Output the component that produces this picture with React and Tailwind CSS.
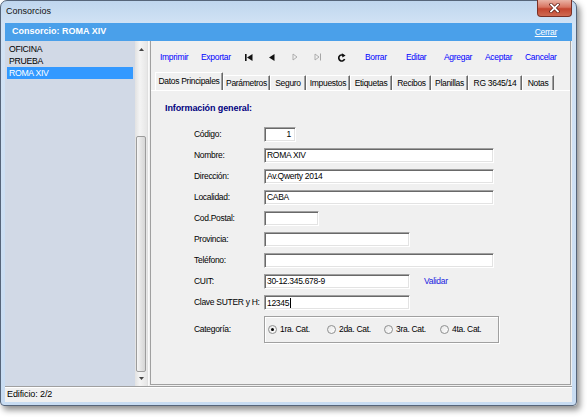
import React from "react";

const Input = ({ w, value, right, caret }) => (
  <div
    className={`h-[15px] bg-white border border-t-[#a0a0a0] border-l-[#a0a0a0] border-b-white border-r-white shadow-[inset_1px_1px_0_#696969,inset_-1px_-1px_0_#e3e3e3] flex items-center leading-none ${right ? "justify-end pr-[4px]" : "pl-[2px]"}`}
    style={{ width: w }}
  >
    {value}
    {caret && <span className="inline-block w-px h-[10px] bg-black ml-px" />}
  </div>
);

const Row = ({ label, children }) => (
  <div className="h-[21.1px] flex items-center">
    <div className="w-[70px]">{label}</div>
    {children}
  </div>
);

const Tab = ({ w, label, active }) => (
  <div
    className={`${active ? "h-[18px] pb-[1px]" : "h-[15px]"} flex items-center justify-center border-t border-l border-white border-r border-r-[#696969] shadow-[inset_-1px_0_0_#a0a0a0] rounded-t-[1px] whitespace-nowrap`}
    style={{ width: w }}
  >
    {label}
  </div>
);

const Radio = ({ w, label, checked }) => (
  <div className="flex items-center" style={{ width: w }}>
    <div className="w-[9px] h-[9px] rounded-full border border-[#8e8f8f] bg-gradient-to-br from-[#e6e6e6] to-white flex items-center justify-center">
      {checked && <div className="w-[3px] h-[3px] rounded-full bg-black" />}
    </div>
    <span className="ml-[3px]">{label}</span>
  </div>
);

export default function App() {
  return (
    <div className="w-[588px] h-[419px] bg-white overflow-hidden font-['Liberation_Sans',Arial,sans-serif] text-[8.5px] tracking-[-0.3px] text-black">
      <div className="relative w-[577px] h-[406px] rounded-t-[7px] rounded-b-[4px] border border-[#56657a] bg-[linear-gradient(to_bottom,#bfd6ee,#d2e3f5_24px,#c8dcf2)] shadow-[3px_4px_6px_rgba(0,0,0,0.45)] flex flex-col">
        {/* title bar */}
        <div className="h-[22px] flex items-center pl-[5px] text-[9px] tracking-[0px] text-[#111]">
          Consorcios
        </div>
        <div className="absolute top-[-1px] right-[4px] w-[35px] h-[17px] rounded-b-[4px] border border-[#7a3025] border-t-0 bg-[linear-gradient(to_bottom,#eab3a5,#d8735f_45%,#c3452f_55%,#cf6a52)] flex items-center justify-center">
          <svg width="11" height="10" viewBox="0 0 11 10">
            <path d="M2 1.5 L9 8.5 M9 1.5 L2 8.5" stroke="#5a1a10" strokeWidth="3.2" strokeLinecap="square" />
            <path d="M2 1.5 L9 8.5 M9 1.5 L2 8.5" stroke="#ffffff" strokeWidth="1.8" strokeLinecap="square" />
          </svg>
        </div>

        {/* client */}
        <div className="mx-[4px] flex flex-col bg-[#f0f0f0]">
          {/* header */}
          <div className="h-[18px] bg-[#4aa0ea] flex items-center justify-between pl-[7px] pr-[15px] text-white">
            <span className="font-bold text-[9px] tracking-[0px]">Consorcio: ROMA XIV</span>
            <span className="underline text-[8.5px]">Cerrar</span>
          </div>

          {/* body */}
          <div className="h-[345px] flex">
            {/* list */}
            <div className="w-[130px] bg-[#d1d9e6] pt-[2px] pl-[2px] text-[8.7px]">
              <div className="h-[12px] w-[126px] pl-[2px] leading-[12px]">OFICINA</div>
              <div className="h-[12px] w-[126px] pl-[2px] leading-[12px]">PRUEBA</div>
              <div className="h-[12px] w-[126px] pl-[2px] leading-[12px] bg-[#3399ff] text-white">ROMA XIV</div>
            </div>
            {/* scrollbar */}
            <div className="w-[13px] flex flex-col bg-[linear-gradient(to_right,#e2e2e2,#f4f4f4_40%,#e6e6e6)] border-r border-[#e0e0e0]">
              <div className="h-[14px] flex items-center justify-center pt-[2px]">
                <svg width="5" height="3" viewBox="0 0 5 3"><path d="M0 3 L2.5 0 L5 3Z" fill="#444" /></svg>
              </div>
              <div className="h-[81px]" />
              <div className="h-[236px] mx-[1px] rounded-[2px] border border-[#9c9c9c] bg-[linear-gradient(to_right,#f6f6f6,#e4e4e4_50%,#d6d6d6)]" />
              <div className="h-[13px] flex items-center justify-center">
                <svg width="5" height="3" viewBox="0 0 5 3"><path d="M0 0 L2.5 3 L5 0Z" fill="#444" /></svg>
              </div>
            </div>
            {/* right area */}
            <div className="flex-1 border-l border-[#fafafa] pl-px pb-px">
              <div className="h-full mr-[1px] border-l border-r border-b border-[#a0a0a0] flex flex-col">
                {/* toolbar */}
                <div className="mt-[9px] h-[14px] flex items-center pl-[9px] text-[#0000ff]">
                  <div className="w-[41px]">Imprimir</div>
                  <div className="w-[43px]">Exportar</div>
                  <div className="w-[24px] pl-[1px] flex items-center">
                    <svg width="8" height="7" viewBox="0 0 8 7">
                      <rect x="0" y="0" width="1.6" height="7" fill="#111" />
                      <path d="M7.5 0 L2 3.5 L7.5 7Z" fill="#111" />
                    </svg>
                  </div>
                  <div className="w-[23px] pl-[1px] flex items-center">
                    <svg width="6" height="7" viewBox="0 0 6 7"><path d="M5.5 0 L0 3.5 L5.5 7Z" fill="#111" /></svg>
                  </div>
                  <div className="w-[23px] pl-[1px] flex items-center">
                    <svg width="6" height="8" viewBox="0 0 6 8">
                      <path d="M1 1 L5 4 L1 7Z" fill="none" stroke="#a6a6a6" strokeWidth="0.9" />
                    </svg>
                  </div>
                  <div className="w-[24px] flex items-center">
                    <svg width="8" height="8" viewBox="0 0 8 8">
                      <path d="M1 1 L5 4 L1 7Z" fill="none" stroke="#a6a6a6" strokeWidth="0.9" />
                      <path d="M6.5 0.5 L6.5 7.5" stroke="#a6a6a6" strokeWidth="1" />
                    </svg>
                  </div>
                  <div className="w-[27px] flex items-center">
                    <svg width="8" height="9" viewBox="0 0 8 9">
                      <path d="M5.6 2.6 A3 3 0 1 0 6.6 6" stroke="#111" strokeWidth="1.7" fill="none" />
                      <path d="M3.8 0.2 L7.6 2.4 L4.4 4.6Z" fill="#111" />
                    </svg>
                  </div>
                  <div className="w-[41px]">Borrar</div>
                  <div className="w-[38px]">Editar</div>
                  <div className="w-[41px]">Agregar</div>
                  <div className="w-[40px]">Aceptar</div>
                  <div>Cancelar</div>
                </div>

                {/* tabs */}
                <div className="mt-[8px] h-[18px] flex items-end pl-[4px]">
                  <Tab w={68} label="Datos Principales" active />
                  <Tab w={47} label="Parámetros" />
                  <Tab w={36} label="Seguro" />
                  <Tab w={44} label="Impuestos" />
                  <Tab w={42} label="Etiquetas" />
                  <Tab w={39} label="Recibos" />
                  <Tab w={37} label="Planillas" />
                  <Tab w={54} label="RG 3645/14" />
                  <Tab w={32} label="Notas" />
                </div>

                {/* content */}
                <div className="flex-1 border-t border-white">
                  <div className="mt-[11px] h-[12px] leading-[12px] pl-[14px] font-bold text-[9px] tracking-[-0.1px] text-[#000080]">
                    Información general:
                  </div>
                  <div className="mt-[9.5px] pl-[43px]">
                    <Row label="Código:"><Input w={32} value="1" right /></Row>
                    <Row label="Nombre:"><Input w={230} value="ROMA XIV" /></Row>
                    <Row label="Dirección:"><Input w={230} value="Av.Qwerty 2014" /></Row>
                    <Row label="Localidad:"><Input w={230} value="CABA" /></Row>
                    <Row label="Cod.Postal:"><Input w={55} value="" /></Row>
                    <Row label="Provincia:"><Input w={146} value="" /></Row>
                    <Row label="Teléfono:"><Input w={230} value="" /></Row>
                    <Row label="CUIT:">
                      <Input w={146} value="30-12.345.678-9" />
                      <span className="ml-[14px] text-[#1a1ae0]">Validar</span>
                    </Row>
                    <Row label="Clave SUTER y H:"><Input w={146} value="12345" caret /></Row>
                    <div className="mt-[3px] flex items-center">
                      <div className="w-[70px]">Categoría:</div>
                      <div className="w-[235px] h-[27px] border border-[#a0a0a0] shadow-[inset_1px_1px_0_#fff,1px_1px_0_#fff] flex items-center pl-[3px]">
                        <Radio w={59} label="1ra. Cat." checked />
                        <Radio w={57} label="2da. Cat." />
                        <Radio w={56} label="3ra. Cat." />
                        <Radio w={50} label="4ta. Cat." />
                      </div>
                    </div>
                  </div>
                </div>
              </div>
            </div>
          </div>

          {/* status bar */}
          <div className="h-[16px] border-t border-[#a0a0a0] shadow-[inset_0_1px_0_#fff] flex items-center pl-[2px] text-[9px] tracking-[-0.1px]">
            Edificio: 2/2
          </div>
        </div>
      </div>
    </div>
  );
}
